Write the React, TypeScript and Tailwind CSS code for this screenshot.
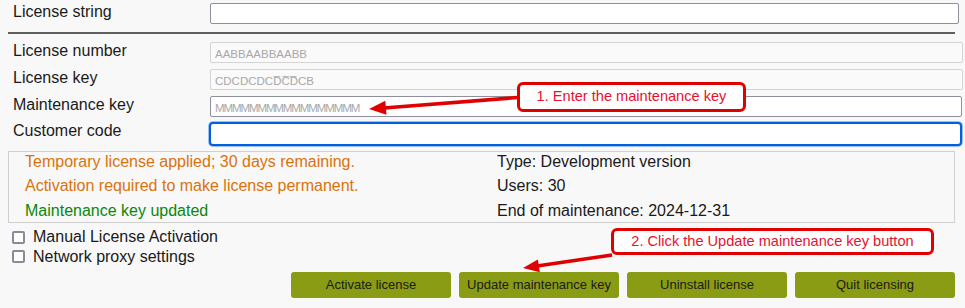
import React from "react";

const font = { fontFamily: '"Liberation Sans", Arial, sans-serif' };

function Field({
  label,
  value,
  kind,
  tight,
}: {
  label: string;
  value?: string;
  kind: "plain" | "disabled" | "active" | "focus";
  tight?: boolean;
}) {
  const box =
    kind === "disabled"
      ? "h-[21px] mr-[2px] border border-[#d4d4d4] bg-[#fafafa] rounded-[2px]"
      : kind === "active"
      ? "h-[21px] mr-[3px] border border-[#8f8f9d] bg-white rounded-[2px]"
      : kind === "focus"
      ? "h-[24px] mr-[3px] -ml-[1px] border-2 border-[#0060df] bg-white rounded-[4px] ring-1 ring-[#9dbff0]"
      : "h-[21px] mr-[6px] border border-[#8f8f9d] bg-white rounded-[2px]";
  return (
    <div className="flex items-start">
      <div className="w-[210px] pl-[13px] text-[16px] leading-[17px] text-[#1a1a1a]">{label}</div>
      <div
        className={`flex-1 flex items-center pt-[4px] pl-[4px] text-[11.5px] text-[#a8a8a8] ${
          tight ? "tracking-[-1.1px]" : ""
        } ${box}`}
      >
        {value}
      </div>
    </div>
  );
}

function Check({ label }: { label: string }) {
  return (
    <div className="flex items-center h-[19.5px] pl-[12px]">
      <div className="w-[13px] h-[13px] border-2 border-[#8a8a98] rounded-[2px] bg-white" />
      <span className="ml-[8px] text-[16px] leading-[20px] text-[#1a1a1a]">{label}</span>
    </div>
  );
}

export default function App() {
  const buttons = ["Activate license", "Update maintenance key", "Uninstall license", "Quit licensing"];
  return (
    <div className="relative w-[965px] h-[308px] overflow-hidden bg-[#f8f8f8]" style={font}>
      <div className="pt-[3px]">
        <Field label="License string" kind="plain" />
      </div>
      <div className="mt-[8px] mx-[8px] mr-[10px] h-[2px] bg-[#5f5f5f]" />
      <div className="mt-[8px] flex flex-col gap-[6px]">
        <Field label="License number" value="AABBAABBAABB" kind="disabled" />
        <Field label="License key" value={"CDCDCDC" + "D\u0305C\u0305D\u0305" + "CB"} kind="disabled" />
        <Field label="Maintenance key" value="MMMMMMMMMMMMMMMMM" kind="active" tight />
        <div className="-mt-[1px]">
          <Field label="Customer code" kind="focus" />
        </div>
      </div>

      {/* status box */}
      <div className="mt-[4.5px] ml-[8px] mr-[10px] h-[72px] border border-[#cfcfcf] bg-[#f8f8f8] grid grid-cols-[488px_1fr] text-[16px] leading-[20px]">
        <div className="flex flex-col gap-[4.5px] pl-[16px]">
          <div className="text-[#d9730d]">Temporary license applied; 30 days remaining.</div>
          <div className="text-[#d9730d]">Activation required to make license permanent.</div>
          <div className="text-[#0a870a]">Maintenance key updated</div>
        </div>
        <div className="flex flex-col gap-[4.5px] text-[#1a1a1a]">
          <div>Type: Development version</div>
          <div>Users: 30</div>
          <div>End of maintenance: 2024-12-31</div>
        </div>
      </div>

      <div className="mt-[5px]">
        <Check label="Manual License Activation" />
        <Check label="Network proxy settings" />
      </div>

      <div className="mt-[5.5px] flex justify-end gap-[8px] pr-[10px]">
        {buttons.map((b) => (
          <button
            key={b}
            className="w-[160px] h-[26px] rounded-[3px] bg-[#8a9c14] text-[13px] text-[#1a1a1a] flex items-center justify-center"
          >
            {b}
          </button>
        ))}
      </div>

      {/* annotations */}
      <svg className="absolute inset-0 pointer-events-none" width="965" height="308">
        <line x1="518" y1="97.5" x2="384" y2="108" stroke="#e00000" strokeWidth="3.5" />
        <polygon points="369,109 386.5,114.7 385.3,100.7" fill="#e00000" />
        <line x1="612" y1="255" x2="537" y2="266" stroke="#e00000" strokeWidth="3.5" />
        <polygon points="523,268 539.8,272.2 537.9,259.4" fill="#e00000" />
      </svg>
      <div className="absolute left-[517px] top-[82px] w-[229px] h-[30px] border-[3px] border-[#e00000] rounded-[6px] bg-white flex items-center justify-center text-[14.6px] text-[#e8112d]">
        1. Enter the maintenance key
      </div>
      <div className="absolute left-[611px] top-[228px] w-[323px] h-[27px] border-[3px] border-[#e00000] rounded-[6px] bg-white flex items-center justify-center text-[14.6px] text-[#e8112d]">
        2. Click the Update maintenance key button
      </div>
    </div>
  );
}
